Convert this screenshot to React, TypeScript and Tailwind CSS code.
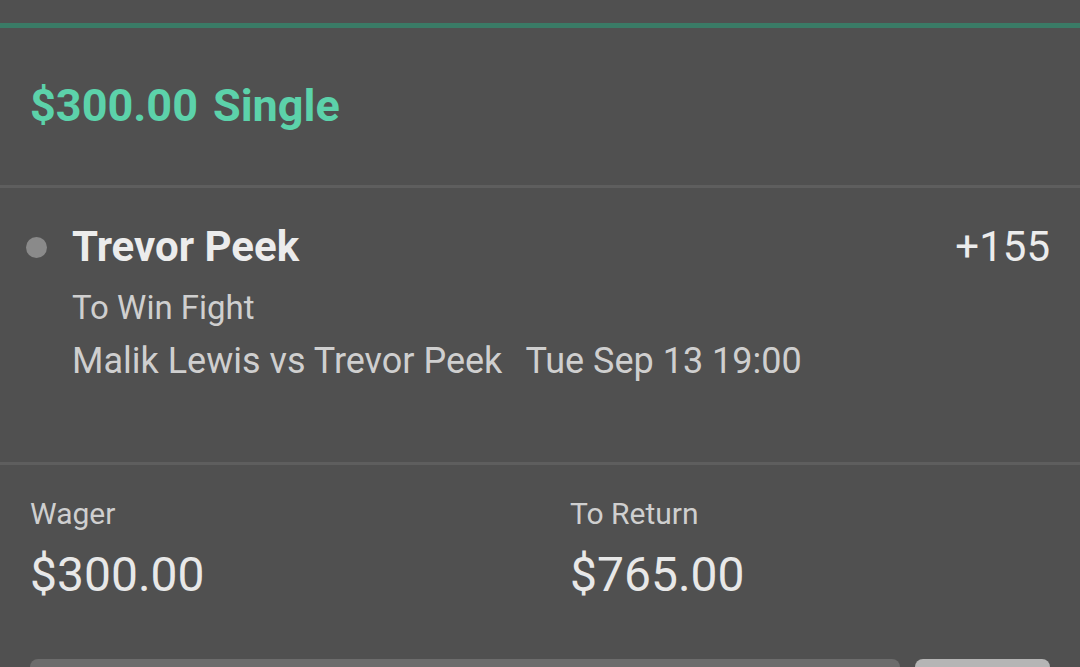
import React from 'react';

const font = { fontFamily: 'Roboto, "Noto Sans", sans-serif' };

export default function App() {
  return (
    <div className="flex h-[667px] w-[1080px] flex-col overflow-hidden bg-[#505050]" style={font}>
      <div className="h-[23px]" />
      <div className="h-[5px] bg-[#3a7b66]" />
      <div className="flex h-[157px] items-center px-[30px] pb-[2px]">
        <span className="text-[45px] font-bold leading-none text-[#5cd2aa]">$300.00</span>
        <span className="ml-[15px] text-[45px] font-bold leading-none text-[#5cd2aa]">Single</span>
      </div>
      <div className="h-[3px] bg-[#5e5e5e]" />
      <div className="flex h-[274px] flex-col px-[26px] pt-[35px]">
        <div className="flex items-center">
          <div className="h-[21px] w-[21px] rounded-full bg-[#8a8a8a]" />
          <div className="ml-[25px] flex-1 text-[42px] font-bold leading-[48px] text-[#ececec]">Trevor Peek</div>
          <div className="mr-[4px] text-[42px] leading-[48px] text-[#ececec]">+155</div>
        </div>
        <div className="ml-[46px] mt-[17px] text-[33px] leading-[40px] text-[#cfcfcf]">To Win Fight</div>
        <div className="ml-[46px] mt-[11px] flex text-[36px] leading-[44px] text-[#cfcfcf]">
          <span>Malik Lewis vs Trevor Peek</span>
          <span className="ml-[23px]">Tue Sep 13 19:00</span>
        </div>
      </div>
      <div className="h-[3px] bg-[#5e5e5e]" />
      <div className="grid grid-cols-[540px_1fr] px-[30px] pt-[31px]">
        <div>
          <div className="text-[30px] leading-[36px] text-[#cfcfcf]">Wager</div>
          <div className="mt-[15px] text-[48px] leading-[56px] text-[#e8e8e8]">$300.00</div>
        </div>
        <div>
          <div className="text-[30px] leading-[36px] text-[#cfcfcf]">To Return</div>
          <div className="mt-[15px] text-[48px] leading-[56px] text-[#e8e8e8]">$765.00</div>
        </div>
      </div>
      <div className="mt-auto flex gap-[15px] px-[30px]">
        <div className="h-[8px] w-[870px] rounded-t-[8px] bg-[#6c6c6c]" />
        <div className="h-[8px] w-[135px] rounded-t-[8px] bg-[#b5b5b5]" />
      </div>
    </div>
  );
}
